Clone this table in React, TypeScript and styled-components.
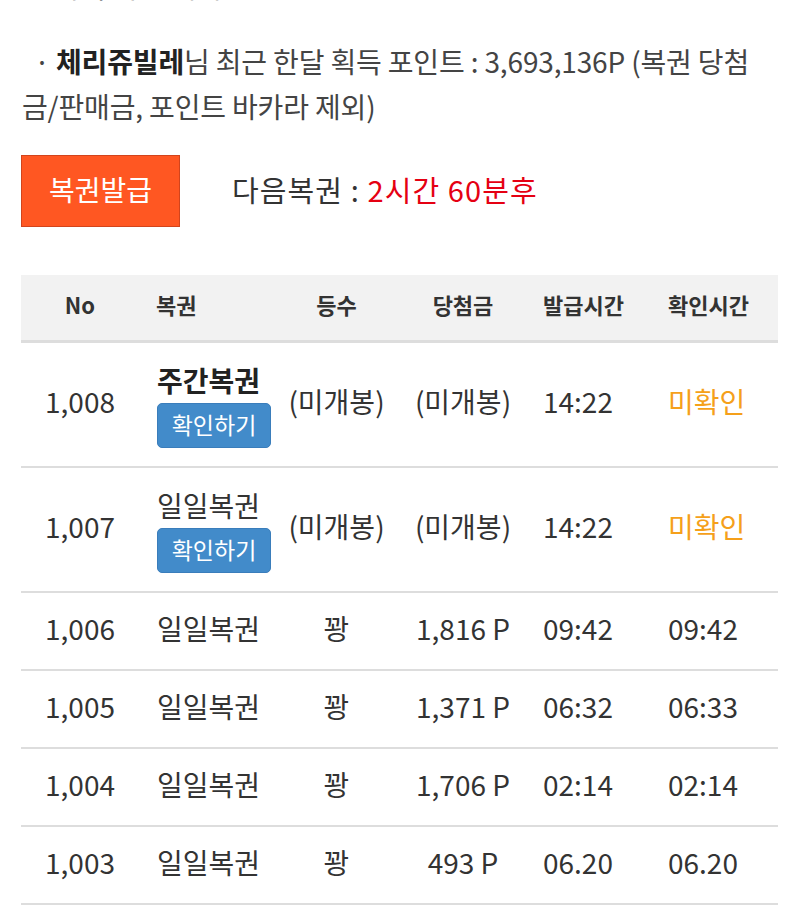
import React from "react";
import styled, { createGlobalStyle } from "styled-components";

const GlobalStyle = createGlobalStyle`
  html, body { margin: 0; padding: 0; background: #ffffff; }
  body {
    font-family: "Noto Sans CJK KR", "Noto Sans", sans-serif;
    color: #333333;
  }
  * { box-sizing: border-box; }
`;

const Page = styled.div`
  padding: 0 22px 0 21px;
  overflow: hidden;
`;

const CutTitle = styled.h3`
  margin: -32px 0 0 4px;
  font-size: 28px;
  line-height: 36px;
  font-weight: 400;
  color: #333333;
`;

const Intro = styled.p`
  margin: 35px 0 0 1px;
  font-size: 28px;
  line-height: 45px;
  color: #444444;
  letter-spacing: -0.15px;
`;

const Strong = styled.b`
  font-weight: 700;
  color: #222222;
`;

const ActionRow = styled.div`
  margin-top: 26px;
  display: flex;
  align-items: center;
  gap: 52px;
`;

const IssueButton = styled.button`
  width: 159px;
  height: 72px;
  background: #ff5722;
  border: 1px solid #d2441c;
  color: #ffffff;
  font-family: inherit;
  font-size: 28px;
  padding: 0 0 4px;
  cursor: pointer;
`;

const NextInfo = styled.div`
  font-size: 29px;
  color: #333333;
  letter-spacing: 1.1px;
  padding-bottom: 4px;
`;

const Red = styled.span`
  color: #e50012;
`;

const Table = styled.div`
  margin-top: 48px;
  width: 757px;
`;

const cols = "118px 146px 103px 150px 125px 115px";

const HeadRow = styled.div`
  display: grid;
  grid-template-columns: ${cols};
  height: 68px;
  align-items: center;
  background: #f2f2f2;
  border-bottom: 3px solid #dddddd;
`;

const Row = styled.div<{ $tall?: boolean }>`
  display: grid;
  grid-template-columns: ${cols};
  height: ${(p) => (p.$tall ? 125 : 78)}px;
  align-items: center;
  border-bottom: 2px solid #dddddd;
`;

type Align = "center" | "left";

const HeadCell = styled.div<{ $align: Align; $pad: number }>`
  text-align: ${(p) => p.$align};
  padding-left: ${(p) => p.$pad}px;
  padding-bottom: 8px;
  font-size: 22px;
  font-weight: 700;
  color: #333333;
`;

const Cell = styled.div<{ $align: Align; $pad: number; $color?: string }>`
  text-align: ${(p) => p.$align};
  padding-left: ${(p) => p.$pad}px;
  padding-bottom: 7px;
  font-size: 28px;
  color: ${(p) => p.$color || "#333333"};
  white-space: nowrap;
`;

const TicketStack = styled.div`
  display: flex;
  flex-direction: column;
  align-items: flex-start;
  gap: 5px;
  margin-bottom: -7px;
`;

const TicketName = styled.div<{ $bold?: boolean }>`
  font-weight: ${(p) => (p.$bold ? 700 : 400)};
  line-height: 36px;
  color: ${(p) => (p.$bold ? "#222222" : "#333333")};
`;

const CheckButton = styled.button`
  width: 114px;
  height: 45px;
  background: #428bca;
  border: 1px solid #3a7dbb;
  border-radius: 5px;
  color: #ffffff;
  font-family: inherit;
  font-size: 23px;
  padding: 0 0 3px;
  cursor: pointer;
`;

const colDefs: { label: string; align: Align; pad: number }[] = [
  { label: "No", align: "center", pad: 0 },
  { label: "복권", align: "left", pad: 17 },
  { label: "등수", align: "center", pad: 0 },
  { label: "당첨금", align: "center", pad: 0 },
  { label: "발급시간", align: "left", pad: 5 },
  { label: "확인시간", align: "left", pad: 5 },
];

type Item = {
  no: string;
  name: string;
  weekly?: boolean;
  unopened?: boolean;
  rank: string;
  prize: string;
  issued: string;
  checked: string;
};

const items: Item[] = [
  { no: "1,008", name: "주간복권", weekly: true, unopened: true, rank: "(미개봉)", prize: "(미개봉)", issued: "14:22", checked: "미확인" },
  { no: "1,007", name: "일일복권", unopened: true, rank: "(미개봉)", prize: "(미개봉)", issued: "14:22", checked: "미확인" },
  { no: "1,006", name: "일일복권", rank: "꽝", prize: "1,816 P", issued: "09:42", checked: "09:42" },
  { no: "1,005", name: "일일복권", rank: "꽝", prize: "1,371 P", issued: "06:32", checked: "06:33" },
  { no: "1,004", name: "일일복권", rank: "꽝", prize: "1,706 P", issued: "02:14", checked: "02:14" },
  { no: "1,003", name: "일일복권", rank: "꽝", prize: "493 P", issued: "06.20", checked: "06.20" },
];

export default function App() {
  return (
    <>
      <GlobalStyle />
      <Page>
        <CutTitle>3. 나의 복권 내역</CutTitle>
        <Intro>
          {"\u00a0\u00a0·\u00a0"}
          <Strong>체리쥬빌레</Strong>님 최근 한달 획득 포인트 : 3,693,136P (복권 당첨
          <br />
          금/판매금, 포인트 바카라 제외)
        </Intro>
        <ActionRow>
          <IssueButton>복권발급</IssueButton>
          <NextInfo>
            다음복권 : <Red>2시간 60분후</Red>
          </NextInfo>
        </ActionRow>
        <Table>
          <HeadRow>
            {colDefs.map((c) => (
              <HeadCell key={c.label} $align={c.align} $pad={c.pad}>
                {c.label}
              </HeadCell>
            ))}
          </HeadRow>
          {items.map((it) => (
            <Row key={it.no} $tall={it.unopened}>
              <Cell $align="center" $pad={0}>{it.no}</Cell>
              <Cell $align="left" $pad={18}>
                {it.unopened ? (
                  <TicketStack>
                    <TicketName $bold={it.weekly}>{it.name}</TicketName>
                    <CheckButton>확인하기</CheckButton>
                  </TicketStack>
                ) : (
                  it.name
                )}
              </Cell>
              <Cell $align="center" $pad={0}>{it.rank}</Cell>
              <Cell $align="center" $pad={0}>{it.prize}</Cell>
              <Cell $align="left" $pad={5}>{it.issued}</Cell>
              <Cell $align="left" $pad={5} $color={it.unopened ? "#f5a01a" : undefined}>
                {it.checked}
              </Cell>
            </Row>
          ))}
        </Table>
      </Page>
    </>
  );
}
